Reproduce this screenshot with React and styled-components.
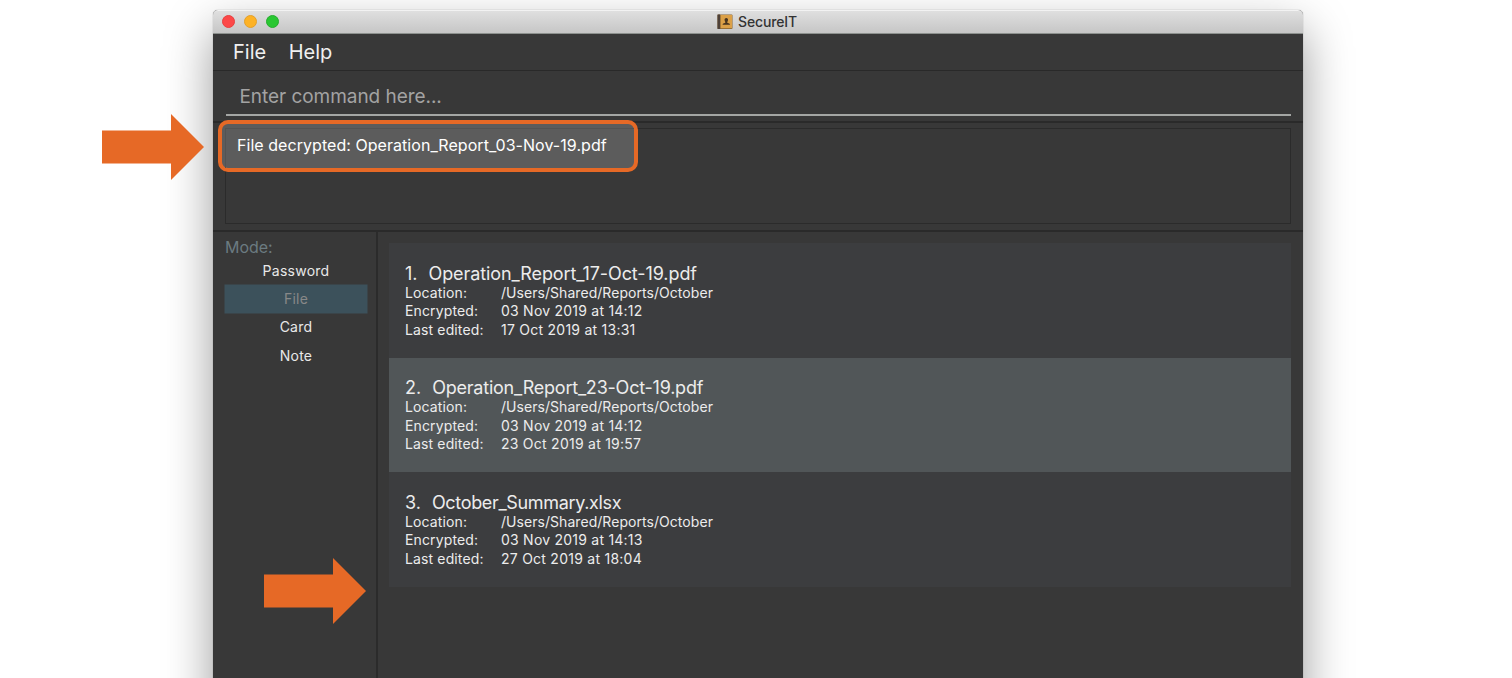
import React from "react";
import styled, { createGlobalStyle } from "styled-components";

const GlobalStyle = createGlobalStyle`
  * { box-sizing: border-box; }
  body {
    margin: 0;
    background: #fff;
    overflow: hidden;
    font-family: Inter, "Liberation Sans", sans-serif;
  }
`;

const Stage = styled.main`
  position: relative;
  height: 678px;
  padding: 10px 209px 0 213px;
  overflow: hidden;
`;

const Window = styled.section`
  height: 760px;
  display: flex;
  flex-direction: column;
  background: #383838;
  border-radius: 5px 5px 0 0;
  box-shadow: 0 0 1px rgba(0, 0, 0, 0.5), 0 20px 48px rgba(0, 0, 0, 0.4);
`;

const TitleBar = styled.header`
  position: relative;
  height: 24px;
  flex: none;
  display: flex;
  align-items: center;
  justify-content: center;
  padding-right: 2px;
  background: linear-gradient(#dfdfdf, #c6c6c6);
  border-radius: 5px 5px 0 0;
  border-top: 1px solid #f2f2f2;
  border-bottom: 1px solid #8d918e;
`;

const TrafficLights = styled.div`
  position: absolute;
  left: 9px;
  top: 4px;
  display: flex;
  gap: 9px;
`;

const Light = styled.span`
  width: 13px;
  height: 13px;
  border-radius: 50%;
  background: ${(p) => p.$color};
  border: 1px solid ${(p) => p.$edge};
`;

const Title = styled.h1`
  margin: 0 0 0 5px;
  font-size: 14px;
  font-weight: 450;
  line-height: 22px;
  letter-spacing: -0.15px;
  color: #333;
`;

const MenuBar = styled.nav`
  height: 37px;
  flex: none;
  display: flex;
  gap: 22.5px;
  padding-left: 20px;
  border-bottom: 1px solid #292929;
  font-size: 20px;
  line-height: 36px;
  color: #f0f0f0;
`;

const MenuItem = styled.span``;

const CommandArea = styled.div`
  height: 52px;
  flex: none;
  padding: 4px 12px 0 13px;
  border-bottom: 2px solid #2a2a2a;
`;

const CommandField = styled.div`
  height: 41px;
  padding: 1px 0 0 13.5px;
  border-bottom: 2px solid #a4a6a4;
  font-size: 19px;
  line-height: 42px;
  letter-spacing: -0.05px;
  color: #a3a3a3;
`;

const ResultArea = styled.div`
  height: 109px;
  flex: none;
  padding: 5px 12px 6px;
  border-bottom: 2px solid #2a2a2a;
`;

const ResultBox = styled.div`
  height: 96px;
  border: 1px solid #2b2b2b;
`;

const Highlight = styled.div`
  position: absolute;
  left: 218px;
  top: 120px;
  width: 420px;
  height: 52px;
  padding: 4px 0 0 3px;
  border: 4px solid #e66926;
  border-radius: 10px;
  background: #5c5c5c;
`;

const HighlightText = styled.div`
  height: 40px;
  padding-left: 11px;
  border: solid #535353;
  border-width: 1px 0 0 1px;
  font-size: 16px;
  line-height: 33px;
  letter-spacing: 0.05px;
  color: #fff;
  white-space: nowrap;
`;

const Body = styled.div`
  flex: 1;
  display: flex;
`;

const Sidebar = styled.aside`
  width: 165px;
  flex: none;
  padding: 5px 9px 0 12px;
  border-right: 2px solid #2b2b2b;
`;

const ModeLabel = styled.div`
  height: 19.5px;
  font-size: 16px;
  line-height: 21px;
  letter-spacing: -0.05px;
  color: #6b7b81;
`;

const ModeItem = styled.div`
  height: 28.4px;
  font-size: 14px;
  line-height: 28px;
  text-align: center;
  letter-spacing: 0.25px;
  color: ${(p) => (p.$active ? "#888" : "#e8e8e8")};
  background: ${(p) => (p.$active ? "#3c515b" : "transparent")};
  box-shadow: ${(p) => (p.$active ? "0 0 0 0.5px #3c515b" : "none")};
`;

const FileList = styled.div`
  flex: 1;
  padding: 11px 12px 0 11px;
`;

const Card = styled.article`
  height: 114.5px;
  padding: 19.7px 16px 0;
  color: #ececec;
  background: ${(p) => (p.$selected ? "#515658" : "#3c3d3f")};
`;

const CardTitle = styled.h2`
  display: flex;
  gap: 11px;
  margin: 0;
  font-size: 18px;
  font-weight: 400;
  line-height: 21px;
`;

const FileName = styled.span`
  letter-spacing: ${(p) => p.$tracking}px;
`;

const Detail = styled.div`
  display: grid;
  grid-template-columns: 96px 1fr;
  font-size: 14px;
  line-height: 18.55px;
`;

const DetailLabel = styled.span`
  letter-spacing: 0.13px;
`;

const DetailValue = styled.span`
  letter-spacing: ${(p) => p.$tracking}px;
`;

const ArrowSvg = styled.svg`
  position: absolute;
  left: ${(p) => p.$x}px;
  top: ${(p) => p.$y}px;
  width: 102px;
  height: 66px;
`;

const Arrow = ({ x, y }) => (
  <ArrowSvg $x={x} $y={y} viewBox="0 0 102 66">
    <path d="M0 16.4H69V0L102 33L69 66V49.4H0Z" fill="#e66926" />
  </ArrowSvg>
);

const BookIcon = () => (
  <svg width="16" height="16" viewBox="0 0 16 16">
    <rect x="0.5" y="0.5" width="15" height="14.5" rx="1" fill="#8a6530" />
    <rect x="0.5" y="0.5" width="2.6" height="14.5" fill="#4d4038" />
    <rect x="3.6" y="1" width="11.4" height="13.2" fill="#dba047" />
    <path
      d="M9.3 4C8 4 7.4 5 7.6 6.2C7.7 7.1 8.4 7.6 8.4 8.5C8.2 9.2 5.6 9.2 5.5 10.7H13.1C13 9.2 10.4 9.2 10.2 8.5C10.2 7.6 10.9 7.1 11 6.2C11.2 5 10.6 4 9.3 4Z"
      fill="#49351f"
    />
  </svg>
);

const modes = ["Password", "File", "Card", "Note"];

const files = [
  { name: "Operation_Report_17-Oct-19.pdf", tracking: -0.09, encrypted: "03 Nov 2019 at 14:12", edited: "17 Oct 2019 at 13:31" },
  { name: "Operation_Report_23-Oct-19.pdf", tracking: -0.22, encrypted: "03 Nov 2019 at 14:12", edited: "23 Oct 2019 at 19:57", selected: true },
  { name: "October_Summary.xlsx", tracking: -0.33, encrypted: "03 Nov 2019 at 14:13", edited: "27 Oct 2019 at 18:04" },
];

export default function App() {
  return (
    <Stage>
      <GlobalStyle />
      <Window>
        <TitleBar>
          <TrafficLights>
            <Light $color="#fc4848" $edge="#e8403f" />
            <Light $color="#fdb226" $edge="#e3a02a" />
            <Light $color="#29c732" $edge="#25ad2d" />
          </TrafficLights>
          <BookIcon />
          <Title>SecureIT</Title>
        </TitleBar>
        <MenuBar>
          <MenuItem>File</MenuItem>
          <MenuItem>Help</MenuItem>
        </MenuBar>
        <CommandArea>
          <CommandField>Enter command here...</CommandField>
        </CommandArea>
        <ResultArea>
          <ResultBox />
        </ResultArea>
        <Body>
          <Sidebar>
            <ModeLabel>Mode:</ModeLabel>
            {modes.map((mode) => (
              <ModeItem key={mode} $active={mode === "File"}>{mode}</ModeItem>
            ))}
          </Sidebar>
          <FileList>
            {files.map((file, i) => (
              <Card key={file.name} $selected={file.selected}>
                <CardTitle>
                  <span>{i + 1}.</span>
                  <FileName $tracking={file.tracking}>{file.name}</FileName>
                </CardTitle>
                <Detail>
                  <DetailLabel>Location:</DetailLabel>
                  <DetailValue $tracking={0.05}>/Users/Shared/Reports/October</DetailValue>
                </Detail>
                <Detail>
                  <DetailLabel>Encrypted:</DetailLabel>
                  <DetailValue $tracking={0.23}>{file.encrypted}</DetailValue>
                </Detail>
                <Detail>
                  <DetailLabel>Last edited:</DetailLabel>
                  <DetailValue $tracking={0.25}>{file.edited}</DetailValue>
                </Detail>
              </Card>
            ))}
          </FileList>
        </Body>
      </Window>
      <Highlight>
        <HighlightText>File decrypted: Operation_Report_03-Nov-19.pdf</HighlightText>
      </Highlight>
      <Arrow x={102} y={114} />
      <Arrow x={264} y={558} />
    </Stage>
  );
}
